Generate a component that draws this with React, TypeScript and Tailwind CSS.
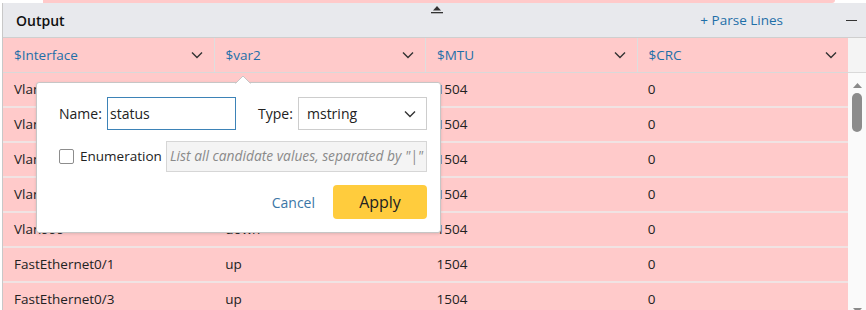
import React from 'react';

const cols = ['$Interface', '$var2', '$MTU', '$CRC'];

const rows = [
  ['Vlan1', 'up', '1504', '0'],
  ['Vlan10', 'up', '1504', '0'],
  ['Vlan20', 'up', '1504', '0'],
  ['Vlan30', 'up', '1504', '0'],
  ['Vlan999', 'down', '1504', '0'],
  ['FastEthernet0/1', 'up', '1504', '0'],
  ['FastEthernet0/3', 'up', '1504', '0'],
];

const Chevron = () => (
  <svg width="12" height="8" viewBox="0 0 12 8" fill="none">
    <path d="M1 1.5l5 5 5-5" stroke="#333" strokeWidth="1.4" />
  </svg>
);

const App: React.FC = () => {
  return (
    <div className="w-[866px] h-[310px] relative overflow-hidden bg-white text-[#222] font-['Open_Sans',sans-serif]">
      {/* strip of the panel above */}
      <div className="h-[3px] flex">
        <div className="ml-[43px] mr-[31px] flex-1 bg-[#ffcaca] rounded-br-[6px]" />
      </div>

      <div className="ml-[2px] border-l border-[#c8c8c8] flex flex-col">
        {/* Header */}
        <div className="h-[35px] bg-[#e8e9ed] border-b border-[#cfcfcf] flex items-center relative">
          <span className="ml-[13px] text-[14px] font-semibold text-[#111]">Output</span>
          <div className="absolute left-[427px] top-[3px] flex flex-col items-center">
            <svg width="14" height="8" viewBox="0 0 14 8">
              <path d="M7 0l4 4.5H3z" fill="#333" />
              <rect x="1" y="6" width="12" height="1.3" fill="#333" />
            </svg>
          </div>
          <span className="ml-auto text-[13.5px] text-[#1e6fa8]">+ Parse Lines</span>
          <span className="ml-[63px] mr-[9px] w-[11px] h-px bg-[#333]" />
        </div>

        {/* Table */}
        <div className="flex">
          <div className="flex-1 flex flex-col">
            <div className="h-[35px] flex bg-[#ffcaca] border-b border-[#d9d9d9]">
              {cols.map((c, i) => (
                <div
                  key={c}
                  className={`flex-1 flex items-center justify-between pl-[11px] pr-[11px] ${i < 3 ? 'border-r border-[#dedede]' : ''}`}
                >
                  <span className="text-[13.5px] text-[#1e6fa8]">{c}</span>
                  <Chevron />
                </div>
              ))}
            </div>
            {rows.map((r, i) => (
              <div key={i} className="h-[35px] flex bg-[#ffcaca] border-b-2 border-[#f0e3e3]">
                {r.map((v, j) => (
                  <div key={j} className="flex-1 flex items-center pl-[11px] text-[13.5px] text-[#222]">
                    {v}
                  </div>
                ))}
              </div>
            ))}
          </div>
          <div className="w-[18px] flex flex-col">
            <div className="h-[35px] bg-[#f4f4f4] border-b border-[#d9d9d9]" />
            <div className="flex-1 bg-[#fafafa] flex flex-col items-center pt-[10px]">
              <svg width="9" height="5" viewBox="0 0 9 5">
                <path d="M4.5 0L9 5H0z" fill="#8a8a8a" />
              </svg>
              <div className="mt-[5px] w-[10px] h-[39px] rounded-full bg-[#8c8c8c]" />
              <div className="flex-1" />
              <svg width="9" height="5" viewBox="0 0 9 5" className="mb-[5px]">
                <path d="M0 0h9L4.5 5z" fill="#8a8a8a" />
              </svg>
            </div>
          </div>
        </div>
      </div>

      {/* Popover */}
      <div className="absolute left-[36px] top-[82px] w-[405px] h-[151px] bg-white border border-[#c6c6c6] rounded-[3px] shadow-[0_1px_3px_rgba(0,0,0,0.12)] pl-[22px] pr-[13px] pt-[14px]">
        <svg width="16" height="9" viewBox="0 0 16 9" className="absolute left-[198px] -top-[8px]">
          <path d="M0 9L8 1l8 8" fill="white" stroke="#c6c6c6" />
          <rect x="0" y="8.5" width="16" height="2" fill="white" />
        </svg>
        <div className="flex items-center h-[33px]">
          <span className="text-[14px] w-[48px]">Name:</span>
          <div className="w-[129px] h-[33px] border border-[#3d83b7] flex items-center px-[2px] text-[14px]">status</div>
          <span className="ml-[22px] text-[14px] w-[40px]">Type:</span>
          <div className="w-[129px] h-[33px] border border-[#cdcdcd] flex items-center justify-between pl-[8px] pr-[10px] text-[14px]">
            mstring
            <Chevron />
          </div>
        </div>
        <div className="flex items-center justify-between h-[31px] mt-[11px]">
          <div className="flex items-center">
            <div className="w-[15px] h-[15px] border border-[#8d8d8d] rounded-[2px] bg-white" />
            <span className="ml-[6px] text-[13.5px]">Enumeration</span>
          </div>
          <div className="w-[261px] h-[31px] bg-[#f4f4f4] border border-[#d6d6d6] flex items-center pl-[3px] overflow-hidden whitespace-nowrap text-[13.8px] italic text-[#8a8a8a]">
            List all candidate values, separated by "|"
          </div>
        </div>
        <div className="flex items-center justify-end mt-[13px]">
          <span className="text-[14px] text-[#3b76a6]">Cancel</span>
          <button className="ml-[18px] w-[94px] h-[34px] rounded-[4px] bg-[#ffcc3d] text-[16px] text-[#222]">Apply</button>
        </div>
      </div>
    </div>
  );
};

export default App;
